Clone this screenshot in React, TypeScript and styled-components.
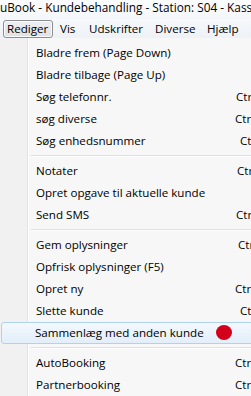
import styled, { createGlobalStyle } from "styled-components";

const GlobalStyle = createGlobalStyle`
  html, body {
    margin: 0;
    padding: 0;
    background: #ffffff;
  }
  body {
    font-family: "Open Sans", "Noto Sans", "DejaVu Sans", sans-serif;
    color: #000;
  }
`;

interface Entry {
  label: string;
  shortcut?: string;
  shift?: number;
  active?: boolean;
  marker?: boolean;
}

type Group = Entry[];

const groups: Group[] = [
  [
    { label: "Bladre frem (Page Down)" },
    { label: "Bladre tilbage (Page Up)" },
    { label: "Søg telefonnr.", shortcut: "Ctrl+T", shift: 1 },
    { label: "søg diverse", shortcut: "Ctrl+D", shift: 0 },
    { label: "Søg enhedsnummer", shortcut: "Ctrl+E", shift: 5 },
  ],
  [
    { label: "Notater", shortcut: "Ctrl+N", shift: 2 },
    { label: "Opret opgave til aktuelle kunde" },
    { label: "Send SMS", shortcut: "Ctrl+M", shift: 1 },
  ],
  [
    { label: "Gem oplysninger", shortcut: "Ctrl+S", shift: 3 },
    { label: "Opfrisk oplysninger (F5)" },
    { label: "Opret ny", shortcut: "Ctrl+O", shift: 0 },
    { label: "Slette kunde", shortcut: "Ctrl+K", shift: 5 },
    { label: "Sammenlæg med anden kunde", active: true, marker: true },
  ],
  [
    { label: "AutoBooking", shortcut: "Ctrl+A", shift: 0 },
    { label: "Partnerbooking", shortcut: "Ctrl+P", shift: 0 },
  ],
];

// width of each top-level menu slot, as in the original window
const topMenus = [
  { label: "Rediger", width: 50 },
  { label: "Vis", width: 29 },
  { label: "Udskrifter", width: 66 },
  { label: "Diverse", width: 52 },
  { label: "Hjælp", width: 43 },
];

const Window = styled.div`
  width: 251px;
  height: 396px;
  overflow: hidden;
  background: #ffffff;
`;

const TitleBar = styled.div`
  height: 19px;
  line-height: 15px;
  font-size: 11.8px;
  white-space: nowrap;
  overflow: hidden;
  background: linear-gradient(#fbfcfd, #f4f7fa);
`;

const MenuBar = styled.div`
  display: flex;
  align-items: center;
  height: 19px;
  padding-left: 3px;
  background: linear-gradient(#f6f8fb, #eef2f6);
`;

const TopItem = styled.div<{ $open?: boolean; $width: number }>`
  flex: none;
  box-sizing: border-box;
  width: ${(p) => p.$width}px;
  height: 18px;
  line-height: 16px;
  padding-left: ${(p) => (p.$open ? "3px" : "6px")};
  font-size: 11.6px;
  white-space: nowrap;
  border: 1px solid ${(p) => (p.$open ? "#8c8e90" : "transparent")};
  border-radius: 3px;
  background: ${(p) =>
    p.$open ? "linear-gradient(#eef0f2, #dfe2e6)" : "transparent"};
  box-shadow: ${(p) => (p.$open ? "inset 0 0 0 1px #f9fafb" : "none")};
`;

const Dropdown = styled.div`
  width: 330px;
  padding-top: 4px;
  background: linear-gradient(
    to right,
    #f1f1f1 0,
    #f1f1f1 27px,
    #e2e3e3 27px,
    #e2e3e3 28px,
    #ffffff 28px,
    #ffffff 29px,
    #f7f7f7 29px
  );
`;

const Row = styled.div<{ $active?: boolean }>`
  display: flex;
  align-items: center;
  height: 22px;
  box-sizing: border-box;
  margin-left: ${(p) => (p.$active ? "1px" : "0")};
  padding-left: ${(p) => (p.$active ? "33px" : "35px")};
  padding-bottom: 1px;
  font-size: 11.6px;
  white-space: nowrap;
  border: 1px solid ${(p) => (p.$active ? "#aed3ef" : "transparent")};
  border-radius: 3px;
  background: ${(p) =>
    p.$active ? "linear-gradient(#f3f8fd, #e2eefa)" : "transparent"};
`;

const Label = styled.span`
  width: 199px;
  flex: none;
  display: flex;
  align-items: center;
`;

const Shortcut = styled.span<{ $shift: number }>`
  margin-left: ${(p) => p.$shift}px;
`;

const Marker = styled.span`
  flex: none;
  display: inline-block;
  width: 16px;
  height: 15px;
  border-radius: 50%;
  background: #d3001c;
  margin-left: 12px;
`;

const Separator = styled.div`
  height: 8px;
  display: flex;
  align-items: center;
  padding-left: 31px;

  &::before {
    content: "";
    flex: 1;
    height: 1px;
    border-top: 1px solid #e0e0e0;
    background: #ffffff;
  }
`;

export default function App() {
  return (
    <Window>
      <GlobalStyle />
      <TitleBar>uBook - Kundebehandling - Station: S04 - Kasse 1</TitleBar>
      <MenuBar>
        {topMenus.map((m, i) => (
          <TopItem key={m.label} $open={i === 0} $width={m.width}>
            {m.label}
          </TopItem>
        ))}
      </MenuBar>
      <Dropdown>
        {groups.map((group, gi) => (
          <div key={gi}>
            {gi > 0 && <Separator />}
            {group.map((item) => (
              <Row key={item.label} $active={item.active}>
                <Label>
                  {item.label}
                  {item.marker && <Marker />}
                </Label>
                {item.shortcut && (
                  <Shortcut $shift={item.shift ?? 0}>{item.shortcut}</Shortcut>
                )}
              </Row>
            ))}
          </div>
        ))}
      </Dropdown>
    </Window>
  );
}
